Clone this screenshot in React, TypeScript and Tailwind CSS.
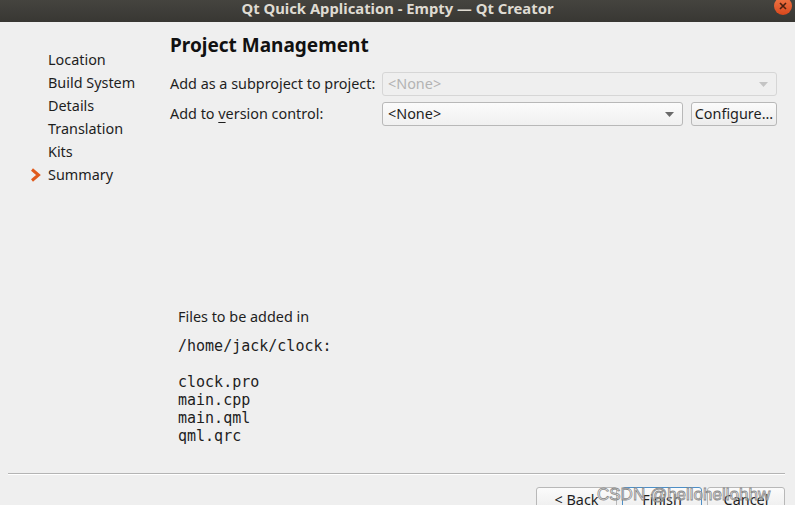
import React from "react";

const steps = ["Location", "Build System", "Details", "Translation", "Kits", "Summary"];
const files = ["clock.pro", "main.cpp", "main.qml", "qml.qrc"];

function ComboArrow({ muted }: { muted?: boolean }) {
  return (
    <svg width="9" height="5" viewBox="0 0 9 5" className="shrink-0">
      <path d="M0 0 L9 0 L4.5 5 Z" fill={muted ? "#c4c4c4" : "#6a6a6a"} />
    </svg>
  );
}

export default function App() {
  return (
    <div
      className="w-[795px] h-[505px] overflow-hidden bg-[#efefef] flex flex-col text-[14.4px] text-[#1e1e1e]"
      style={{ fontFamily: '"Noto Sans", "Open Sans", sans-serif' }}
    >
      {/* title bar */}
      <div className="relative h-[22px] shrink-0 bg-gradient-to-b from-[#45443f] to-[#383733] flex items-start justify-center">
        <span className="text-[14.8px] leading-[17px] font-bold text-[#dfdbd2]">
          Qt Quick Application - Empty — Qt Creator
        </span>
        <div className="absolute right-[3px] top-[-3px] w-[18px] h-[18px] rounded-full bg-gradient-to-b from-[#f07746] to-[#d9471b] flex items-center justify-center">
          <svg width="8" height="8" viewBox="0 0 8 8">
            <path d="M1 1 L7 7 M7 1 L1 7" stroke="#4a2010" strokeWidth="1.6" />
          </svg>
        </div>
      </div>

      <div className="flex flex-1 min-h-0">
        {/* sidebar */}
        <div className="w-[162px] shrink-0 pt-[26px] flex flex-col">
          {steps.map((s, i) => (
            <div key={s} className="h-[23px] flex items-center">
              <div className="w-[48px] flex justify-end pr-[7px]">
                {i === steps.length - 1 && (
                  <svg width="11" height="14" viewBox="0 0 11 14">
                    <path d="M2 1.5 L8.5 7 L2 12.5" fill="none" stroke="#e05a1c" strokeWidth="3" strokeLinejoin="miter" />
                  </svg>
                )}
              </div>
              <span>{s}</span>
            </div>
          ))}
        </div>

        {/* main */}
        <div className="flex-1 pr-[18px] flex flex-col">
          <div className="pl-[8px] pt-[10px] text-[19px] font-bold leading-[26px] text-[#111]">Project Management</div>

          <div className="mt-[14px] flex items-center h-[24px]">
            <span className="w-[220px] pl-[8px] shrink-0">Add as a subproject to project:</span>
            <div className="flex-1 h-[24px] border border-[#d6d6d6] rounded-[3px] bg-[#efefef] flex items-center justify-between pl-[5px] pr-[8px] text-[#b3b3b3]">
              <span>&lt;None&gt;</span>
              <ComboArrow muted />
            </div>
          </div>

          <div className="mt-[6px] flex items-center h-[24px]">
            <span className="w-[220px] pl-[8px] shrink-0">
              Add to <span className="underline underline-offset-[3px]">v</span>ersion control:
            </span>
            <div className="flex-1 h-[24px] border border-[#b8b8b8] rounded-[3px] bg-gradient-to-b from-[#fbfbfb] to-[#f0f0f0] flex items-center justify-between pl-[5px] pr-[8px]">
              <span>&lt;None&gt;</span>
              <ComboArrow />
            </div>
            <div className="ml-[8px] w-[86px] h-[24px] border border-[#b8b8b8] rounded-[3px] bg-gradient-to-b from-[#fbfbfb] to-[#ececec] flex items-center justify-center">
              Configure...
            </div>
          </div>

          <div className="mt-[181px] pl-[16px]">
            <div className="leading-[20px]">Files to be added in</div>
            <div
              className="mt-[9px] text-[15px] leading-[20px]"
              style={{ fontFamily: '"DejaVu Sans Mono", monospace' }}
            >
              /home/jack/clock:
            </div>
            <div
              className="mt-[17px] text-[15px] leading-[18px]"
              style={{ fontFamily: '"DejaVu Sans Mono", monospace' }}
            >
              {files.map((f) => (
                <div key={f}>{f}</div>
              ))}
            </div>
          </div>
        </div>
      </div>

      {/* footer */}
      <div className="shrink-0 h-[32px] relative">
        <div className="ml-[8px] mr-[10px] border-t border-[#b4b4b4] border-b border-b-white" />
        <div className="flex justify-end gap-[5px] pr-[10px] mt-[12px]">
          <div className="w-[81px] h-[26px] border border-[#b8b8b8] rounded-[3px] bg-gradient-to-b from-[#fbfbfb] to-[#ececec] flex items-start pt-[1px] justify-center">
            &lt; Back
          </div>
          <div className="w-[80px] h-[26px] border border-[#4e8fc6] rounded-[3px] bg-gradient-to-b from-[#fbfbfb] to-[#ececec] flex items-start pt-[1px] justify-center">
            Finish
          </div>
          <div className="w-[78px] h-[26px] border border-[#b8b8b8] rounded-[3px] bg-gradient-to-b from-[#fbfbfb] to-[#ececec] flex items-start pt-[1px] justify-center">
            Cancel
          </div>
        </div>
        <div
          className="absolute left-[597px] top-[9px] text-[17px] text-white/50 pointer-events-none"
          style={{ fontFamily: '"Liberation Sans", sans-serif', WebkitTextStroke: "0.8px #8a8a8a" }}
        >
          CSDN @hellohellohhw
        </div>
      </div>
    </div>
  );
}
